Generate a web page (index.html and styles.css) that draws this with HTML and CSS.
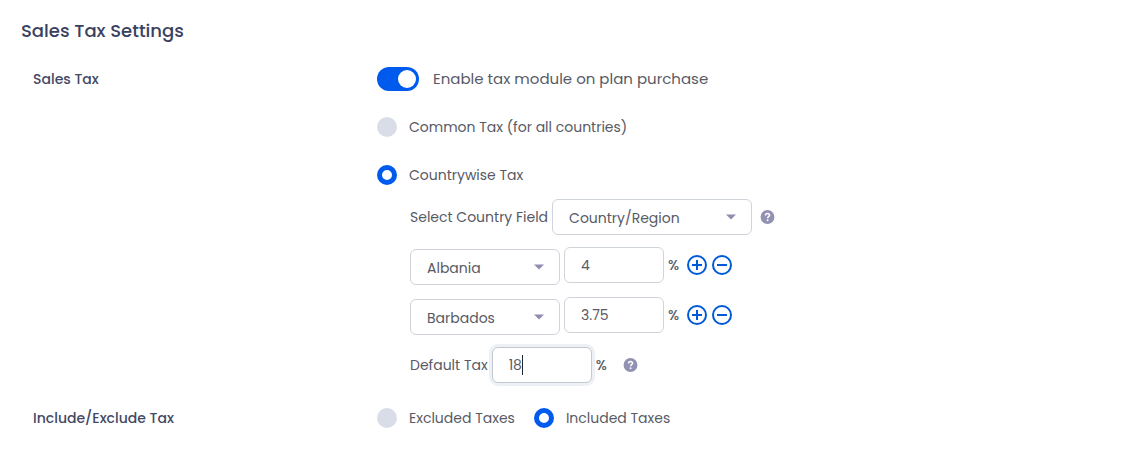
FILE: index.html
```html
<!DOCTYPE html>
<html lang="en">
<head>
<meta charset="utf-8">
<title>Sales Tax Settings</title>
<meta name="viewport" content="width=device-width, initial-scale=1">
<link rel="stylesheet" href="styles.css">
</head>
<body>
<svg class="sprite" aria-hidden="true">
  <symbol id="icon-plus" viewBox="0 0 20 20"><circle cx="10" cy="10" r="9"/><path d="M5 10h10M10 5v10"/></symbol>
  <symbol id="icon-minus" viewBox="0 0 20 20"><circle cx="10" cy="10" r="9"/><path d="M5 10h10"/></symbol>
  <symbol id="icon-help" viewBox="0 0 16 16"><circle cx="8" cy="8" r="7.4" fill="#9391b3"/><path d="M5.9 6.3c0-1.3 1-2 2.1-2s2.2.7 2.2 1.9c0 1.5-2.1 1.5-2.1 3" fill="none" stroke="#fff" stroke-width="1.6"/><circle cx="8.1" cy="11.4" r="1" fill="#fff"/></symbol>
</svg>
<main class="settings">
  <h1 class="title">Sales Tax Settings</h1>
  <form class="form">
    <h2 class="section-label">Sales Tax</h2>
    <div class="section">
      <label class="toggle-row"><input class="toggle" type="checkbox" role="switch" checked>Enable tax module on plan purchase</label>
      <label class="choice"><input class="radio" type="radio" name="mode">Common Tax (for all countries)</label>
      <label class="choice"><input class="radio" type="radio" name="mode" checked>Countrywise Tax</label>
      <div class="details">
        <div class="row">
          <label class="row-label" for="field">Select Country Field</label>
          <select class="control select select-wide" id="field"><option>Country/Region</option></select>
          <button class="help" type="button" aria-label="Help with country field"><svg><use href="#icon-help"/></svg></button>
        </div>
        <div class="row">
          <select class="control select select-country" aria-label="Country 1"><option>Albania</option></select>
          <input class="control amount" type="text" aria-label="Tax rate 1" value="4">
          <span class="percent">%</span>
          <button class="round" type="button" aria-label="Add country"><svg><use href="#icon-plus"/></svg></button>
          <button class="round" type="button" aria-label="Remove country"><svg><use href="#icon-minus"/></svg></button>
        </div>
        <div class="row">
          <select class="control select select-country" aria-label="Country 2"><option>Barbados</option></select>
          <input class="control amount" type="text" aria-label="Tax rate 2" value="3.75">
          <span class="percent">%</span>
          <button class="round" type="button" aria-label="Add country"><svg><use href="#icon-plus"/></svg></button>
          <button class="round" type="button" aria-label="Remove country"><svg><use href="#icon-minus"/></svg></button>
        </div>
        <div class="row">
          <label class="row-label" for="default">Default Tax</label>
          <span class="caret-field"><input class="control amount amount-active" id="default" type="text" value="18"></span>
          <span class="percent">%</span>
          <button class="help" type="button" aria-label="Help with default tax"><svg><use href="#icon-help"/></svg></button>
        </div>
      </div>
    </div>
    <h2 class="section-label">Include/Exclude Tax</h2>
    <div class="section section-inline">
      <label class="choice"><input class="radio" type="radio" name="include">Excluded Taxes</label>
      <label class="choice"><input class="radio" type="radio" name="include" checked>Included Taxes</label>
    </div>
  </form>
</main>
</body>
</html>
```
FILE: styles.css
```css
* { box-sizing: border-box; }
body {
  margin: 0;
  background: #fff;
  color: #585a66;
  font: 14px/20px Poppins, Inter, "Open Sans", sans-serif;
}
.sprite { display: none; }
.settings { padding: 19px 21px; }
.title { margin: 0; color: #3a4160; font-size: 18px; font-weight: 500; line-height: 24px; }
.form {
  display: grid;
  grid-template-columns: 344px 1fr;
  row-gap: 23px;
  padding: 24px 12px 0;
}
.section-label { margin: 0; color: #434864; font-size: 14px; font-weight: 500; line-height: 24px; }
.section { display: flex; flex-direction: column; align-items: flex-start; }
.section-inline { flex-direction: row; gap: 19px; }
.toggle-row { display: flex; align-items: center; gap: 14px; margin-bottom: 24px; font-size: 15px; line-height: 24px; }
.toggle {
  appearance: none;
  display: flex;
  align-items: center;
  justify-content: flex-end;
  width: 42px;
  height: 24px;
  margin: 0;
  padding: 3px;
  border-radius: 12px;
  background: #005aee;
}
.toggle::before { content: ""; width: 18px; height: 18px; border-radius: 50%; background: #fff; }
.toggle:not(:checked) { justify-content: flex-start; background: #d9dde8; }
.choice { display: flex; align-items: center; gap: 12px; line-height: 24px; }
.choice + .choice { margin-top: 24px; }
.section-inline .choice + .choice { margin-top: 0; }
.radio {
  appearance: none;
  width: 20px;
  height: 20px;
  margin: 0;
  border-radius: 50%;
  background: #d9dde8;
}
.radio:checked { border: 5px solid #005aee; background: #fff; }
.details { display: flex; flex-direction: column; gap: 12px; padding: 12px 0 0 33px; }
.row { display: flex; align-items: flex-start; gap: 4px; }
.row-label, .percent { line-height: 36px; }
.percent { width: 12px; font-weight: 500; }
.control {
  height: 36px;
  padding: 0 16px;
  border: 1px solid #ced4da;
  border-radius: 6px;
  background: #fff;
  color: #585a66;
  font: inherit;
  outline: none;
}
.select {
  appearance: none;
  background: #fff url("data:image/svg+xml,%3Csvg xmlns='http://www.w3.org/2000/svg' width='10' height='6'%3E%3Cpath d='M0 .5h10L5 5.5z' fill='%238f8eb0'/%3E%3C/svg%3E") no-repeat right 15px center;
  padding-top: 2px;
}
.select-wide { width: 200px; }
.select-country { width: 150px; margin-top: 2px; }
.amount { width: 100px; }
.amount-active { border-color: #c3c8d2; box-shadow: 0 0 0 3px #edf0f4; }
.caret-field { position: relative; display: flex; }
.caret-field::after {
  content: "";
  position: absolute;
  top: 8px;
  left: 30px;
  width: 1px;
  height: 20px;
  background: #22242e;
}
.help, .round { display: flex; align-items: center; height: 36px; padding: 0; border: 0; background: none; }
.help { margin-left: 4px; }
.help svg { width: 15px; height: 16px; }
.percent + .help { margin-left: 11px; }
.round svg { width: 20px; height: 20px; fill: none; stroke: #005ad8; stroke-width: 2; }
.percent + .round { margin-left: 3px; }
.round + .round { margin-left: 1px; }
```
